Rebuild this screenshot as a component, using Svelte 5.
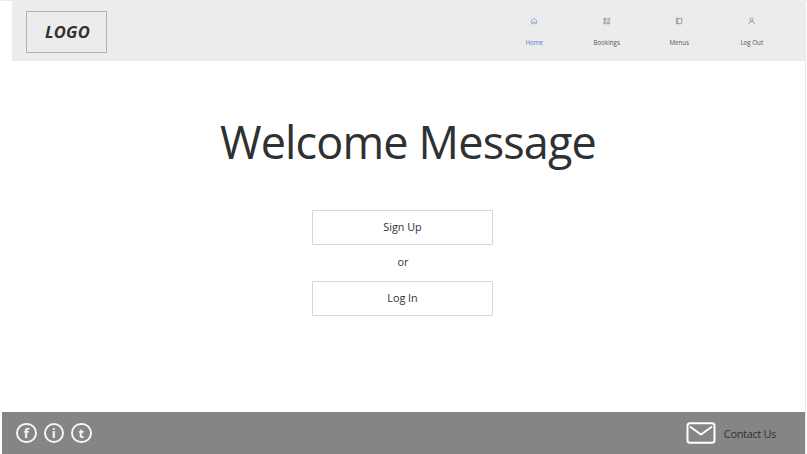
<script>
  const nav = [
    { label: 'Home', icon: 'home', active: true },
    { label: 'Bookings', icon: 'grid' },
    { label: 'Menus', icon: 'menu' },
    { label: 'Log Out', icon: 'user' }
  ];
  const socials = ['f', 'i', 't'];
</script>

<div class="page">
  <header>
    <div class="logo"><span>LOGO</span></div>
    <nav>
      {#each nav as item}
        <a href="#{item.icon}" class:active={item.active}>
          <svg width="8" height="8" viewBox="0 0 8 8" fill="none" stroke="currentColor" stroke-width="0.6">
            {#if item.icon === 'home'}
              <path d="M.9 3.900 4 1.200l3.100 2.700M1.600 3.500v3.300h1.500V5.200h1.800v1.600h1.500V3.500" />
            {:else if item.icon === 'grid'}
              <path d="M.9 1.300h2v2h-2zM.9 4.900h2v2h-2zM4.600 4.900h1.800v2H4.600zM4.300 1.500h3M4.300 3.200h3" />
            {:else if item.icon === 'menu'}
              <path d="M1.300 1.300h5.400v5.400H1.300zM2.700 1.300v5.400" />
            {:else}
              <circle cx="3.700" cy="2.700" r="1.600" />
              <path d="M.9 7c.2-1.600 1.200-2.600 2.800-2.600S6.300 5.400 6.500 7" />
            {/if}
          </svg>
          <span>{item.label}</span>
        </a>
      {/each}
    </nav>
  </header>

  <main>
    <h1>Welcome Message</h1>
    <button>Sign Up</button>
    <p>or</p>
    <button>Log In</button>
  </main>

  <footer>
    <div class="socials">
      {#each socials as letter}
        <span>{letter}</span>
      {/each}
    </div>
    <div class="contact">
      <svg width="30" height="22" viewBox="0 0 30 22" fill="none" stroke="#fff" stroke-width="2">
        <rect x="1.500" y="1.200" width="27" height="19.600" rx="2.500" />
        <path d="M4.500 5 15 12.500 25.500 5" stroke-linecap="round" stroke-linejoin="round" />
      </svg>
      <span>Contact Us</span>
    </div>
  </footer>
</div>

<style>
  .page {
    box-sizing: border-box;
    width: 807px;
    height: 454px;
    padding: 0 1px 0 0;
    border-top: 1px solid #ececec;
    display: flex;
    flex-direction: column;
    overflow: hidden;
    background: #fff;
    color: #2e3131;
    font-family: 'Open Sans', 'Noto Sans', sans-serif;
    box-shadow: inset -1px 0 #fff, inset -2px 0 #e8e8e8;
  }
  header {
    flex: none;
    box-sizing: border-box;
    height: 60px;
    margin: 0 1px 0 12px;
    padding: 10px 17px 0 14px;
    display: flex;
    justify-content: space-between;
    background: #ececec;
  }
  .logo {
    box-sizing: border-box;
    width: 81px;
    height: 42px;
    border: 1px solid #b3b3b3;
    display: flex;
    align-items: center;
    justify-content: center;
    font-size: 16.500px;
    line-height: 22px;
    font-weight: 700;
    font-style: italic;
  }
  .logo span {
    margin-left: 2px;
    letter-spacing: 0.2px;
  }
  nav {
    display: flex;
  }
  a {
    width: 72.500px;
    padding-top: 6px;
    display: flex;
    flex-direction: column;
    align-items: center;
    color: #555;
    font-size: 6.200px;
    line-height: 10px;
    text-decoration: none;
  }
  a.active {
    color: #4a80d8;
  }
  a svg {
    opacity: 0.85;
  }
  a span {
    margin-top: 13px;
  }
  main {
    flex: 1;
    display: flex;
    flex-direction: column;
    align-items: center;
  }
  h1 {
    margin: 50px 0 0 10px;
    font-size: 45px;
    line-height: 62px;
    font-weight: 400;
    letter-spacing: -0.85px;
    white-space: nowrap;
  }
  button {
    box-sizing: border-box;
    width: 181px;
    height: 35px;
    margin: 0 1px 0 0;
    padding: 0 0 2px;
    border: 1px solid #d7d7d7;
    border-radius: 1px;
    background: #fff;
    color: inherit;
    font: 10.800px/16px 'Open Sans', sans-serif;
  }
  h1 + button {
    margin-top: 37px;
  }
  p {
    margin: 0;
    font-size: 10.800px;
    line-height: 33px;
    height: 36px;
  }
  footer {
    flex: none;
    box-sizing: border-box;
    height: 42px;
    margin: 0 1px 0 2px;
    padding: 0 29px 0 14px;
    display: flex;
    align-items: center;
    justify-content: space-between;
    background: #858585;
  }
  .socials {
    display: flex;
    gap: 7px;
  }
  .socials span {
    box-sizing: border-box;
    width: 20.500px;
    height: 20.500px;
    border: 2px solid #f6f6f6;
    border-radius: 50%;
    color: #f6f6f6;
    font: 700 13px/16px 'Open Sans', sans-serif;
    text-align: center;
  }
  .contact {
    display: flex;
    align-items: center;
    gap: 7px;
    font-size: 11px;
    line-height: 16px;
  }
  .contact svg {
    margin: -1px 1px 0 0;
  }
  .contact span {
    margin-top: 2px;
    letter-spacing: -0.35px;
  }
</style>
